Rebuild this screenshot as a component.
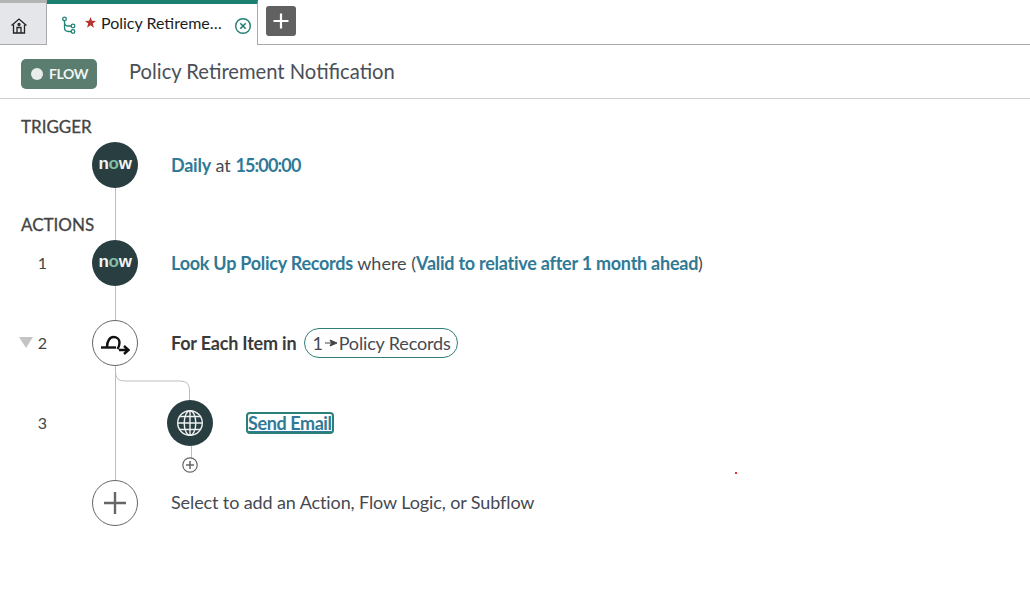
<div class="tabs">
  <button class="tab home" aria-label="Home">
    <svg width="18" height="18" viewBox="0 0 18 18" fill="none" stroke="#222" stroke-width="1.3">
      <path d="M1.5 8.5 9 2l7.5 6.5" />
      <path d="M3.5 7.5V16h11V7.5" />
      <path d="M7 16v-5.5h4V16" />
      <circle cx="9" cy="7.5" r="1" />
    </svg>
  </button>
  <div class="tab active">
    <svg class="branch" width="16" height="18" viewBox="0 0 16 18" fill="none" stroke="#1f8476" stroke-width="1.3">
      <circle cx="3.5" cy="3" r="1.8" />
      <circle cx="12" cy="10" r="1.8" />
      <circle cx="12" cy="15.5" r="1.8" />
      <path d="M3.5 5v6.5q0 4 4 4h2.7M3.5 6.5q0 3.5 4 3.5h2.7" />
    </svg>
    <svg class="star" width="11" height="11" viewBox="0 0 10 10" fill="#b5342c"><path d="M5 0l1.3 3.4L10 3.7 7.1 6l1 3.7L5 7.6 1.9 9.7l1-3.7L0 3.7l3.7-.3z" /></svg>
    <span class="tabname">Policy Retireme…</span>
    <svg class="close" width="18" height="18" viewBox="0 0 18 18" fill="none" stroke="#1f7f72" stroke-width="1.4">
      <circle cx="9" cy="9" r="7.3" />
      <path d="M6.3 6.3l5.4 5.4M11.7 6.3l-5.4 5.4" stroke-width="1.6" />
    </svg>
  </div>
  <button class="add" aria-label="New tab">
    <svg width="18" height="18" viewBox="0 0 18 18" stroke="#fff" stroke-width="2.2"><path d="M9 1.5v15M1.5 9h15" /></svg>
  </button>
</div>

<div class="titlebar">
  <span class="badge"><i class="dot"></i>FLOW</span>
  <h1>Policy Retirement Notification</h1>
</div>

<main class="flow">
  <svg class="wires" width="300" height="440" fill="none" stroke="#bdbdbd" stroke-width="1">
    <path d="M115.5 89V141M115.5 187V221M115.5 267V381" />
    <path d="M115.5 267v6q0 9 9 9h56q9 0 9 9v10" />
    <path d="M191.5 347v12" />
  </svg>

  <div class="label first">TRIGGER</div>
  <div class="row">
    <div class="num"></div>
    <div class="node dark"><span class="now">n<b>o</b>w</span></div>
    <div class="text"><a href="#t">Daily</a> at <a class="time" href="#t">15:00:00</a></div>
  </div>

  <div class="label second">ACTIONS</div>
  <div class="row">
    <div class="num">1</div>
    <div class="node dark"><span class="now">n<b>o</b>w</span></div>
    <div class="text"><a href="#a">Look Up Policy Records</a> where (<a href="#a">Valid to relative after 1 month ahead</a>)</div>
  </div>

  <div class="row gap">
    <div class="num"><i class="tri"></i>2</div>
    <div class="node light">
      <svg width="32" height="24" viewBox="0 0 32 24" fill="none" stroke="#111" stroke-width="2.4">
        <path d="M2 16.5h15" />
        <path d="M8 16c0-6 3-10 6.5-10 3.5 0 6 2.5 6 5.5 0 3-1 5-2 6.5" />
        <path d="M20 19h9.5M25 15l4.5 4-4.5 4" />
      </svg>
    </div>
    <div class="text"><strong>For Each Item in</strong><span class="pill">1<svg width="14" height="8" viewBox="0 0 14 8"><path d="M1 4h6M6 1l7 3-7 3 1.5-3z" fill="#444" stroke="#444" stroke-width="1" /></svg>Policy Records</span></div>
  </div>

  <div class="row gap nested">
    <div class="num">3</div>
    <div class="node dark">
      <svg width="28" height="28" viewBox="0 0 28 28" fill="none" stroke="#eef1f1" stroke-width="1.4">
        <circle cx="14" cy="14" r="12.3" />
        <ellipse cx="14" cy="14" rx="5.8" ry="12.3" />
        <path d="M14 1.7v24.6M1.7 14h24.6M3.6 7.5h20.8M3.6 20.5h20.8" />
      </svg>
      <span class="miniadd">
        <svg width="16" height="16" viewBox="0 0 16 16" fill="#fff" stroke="#666" stroke-width="1.2">
          <circle cx="8" cy="8" r="7.2" />
          <path d="M8 4v8M4 8h8" stroke-width="1.5" />
        </svg>
      </span>
    </div>
    <div class="text send"><a class="focused" href="#s">Send Email</a></div>
  </div>

  <div class="row gap">
    <div class="num"></div>
    <div class="node light">
      <svg width="24" height="24" viewBox="0 0 24 24" stroke="#666" stroke-width="2.4"><path d="M12 1v22M1 12h22" /></svg>
    </div>
    <div class="text add-text">Select to add an Action, Flow Logic, or Subflow</div>
  </div>

  <i class="speck"></i>
</main>

<style>
  :global(body) {
    margin: 0;
    background: #fff;
  }
  .tabs, .titlebar, .flow {
    font-family: Lato, "Noto Sans", sans-serif;
    color: #454a52;
  }
  .tabs {
    display: flex;
    height: 44px;
    border-bottom: 1px solid #a9a9a9;
  }
  .tab {
    box-sizing: border-box;
    height: 45px;
    padding: 0;
    border: 0;
  }
  .home {
    width: 47px;
    background: #e4e6e9;
    border-top: 3px solid #b4b4b4;
    border-right: 1px solid #a9a9a9;
    border-bottom: 1px solid #a9a9a9;
    display: flex;
    align-items: center;
    justify-content: center;
    padding: 5px 8px 0 0;
  }
  .active {
    width: 211px;
    background: #fff;
    border-top: 4px solid #1d7f6f;
    border-right: 1px solid #a9a9a9;
    display: flex;
    align-items: center;
    padding-left: 14px;
  }
  .branch { flex: none; margin-top: 1px; }
  .star {
    flex: none;
    margin: -5px 0 0 8px;
  }
  .tabname {
    color: #1d1d1d;
    font-size: 16px;
    margin: -4px 0 0 5px;
    white-space: nowrap;
  }
  .close { margin-left: auto; margin-right: 6px; margin-top: 3px; transform: translateX(1px); }
  .add {
    width: 30px;
    height: 30px;
    margin: 6px 0 0 8px;
    padding: 0;
    border: 0;
    border-radius: 3px;
    background: #616161;
    display: flex;
    align-items: center;
    justify-content: center;
  }
  .titlebar {
    height: 53px;
    border-bottom: 1px solid #cfcfcf;
    display: flex;
    align-items: center;
    padding-left: 21px;
  }
  .badge {
    box-sizing: border-box;
    width: 76px;
    height: 30px;
    margin-top: 4px;
    background: #5a7d70;
    border-radius: 5px;
    color: #f2f5f4;
    font-size: 14px;
    font-weight: 700;
    letter-spacing: -0.4px;
    display: flex;
    align-items: center;
    padding-left: 10px;
    gap: 6px;
  }
  .dot {
    width: 12px;
    height: 12px;
    background: #e8edeb;
    border-radius: 50%;
  }
  h1 {
    margin: -2px 0 0 32px;
    font-size: 20.2px;
    font-weight: 400;
    color: #4b4f58;
  }
  .flow {
    position: relative;
    padding: 18px 0 0 21px;
    font-size: 18px;
  }
  .wires {
    position: absolute;
    left: 0;
    top: 0;
  }
  .label {
    height: 20px;
    line-height: 20px;
    font-size: 17px;
    color: #444;
    margin-bottom: 5px;
    -webkit-text-stroke: 0.3px #444;
  }
  .second { margin-top: 27px; }
  .row {
    position: relative;
    display: flex;
    align-items: center;
    height: 46px;
  }
  .gap { margin-top: 34px; }
  .num {
    width: 71px;
    flex: none;
    box-sizing: border-box;
    padding-right: 45px;
    display: flex;
    justify-content: flex-end;
    align-items: center;
    font-size: 16px;
    color: #444;
    margin-top: -2px;
  }
  .tri {
    width: 0;
    height: 0;
    border-left: 7px solid transparent;
    border-right: 7px solid transparent;
    border-top: 11px solid #c4c4c4;
    margin-right: 5px;
  }
  .node {
    box-sizing: border-box;
    width: 46px;
    height: 46px;
    flex: none;
    border-radius: 50%;
    display: flex;
    align-items: center;
    justify-content: center;
    position: relative;
  }
  .dark { background: #293e40; }
  .light { background: #fff; border: 1px solid #666; }
  .now {
    font-family: "Liberation Sans", sans-serif;
    font-weight: 700;
    font-size: 17px;
    color: #f1f4f3;
    letter-spacing: -0.3px;
    margin-top: -3px;
  }
  .now b { color: #7fbfa5; }
  .text {
    margin-left: 33px;
    display: flex;
    align-items: center;
    white-space: pre;
  }
  .add-text { letter-spacing: -0.11px; margin-top: -2px; }
  .text a {
    color: #2f7a96;
    font-weight: 700;
    letter-spacing: -0.25px;
    text-decoration: none;
  }
  .text a.time { letter-spacing: -0.85px; }
  .text strong { font-weight: 700; color: #3a3a3a; letter-spacing: -0.2px; }
  .pill {
    box-sizing: border-box;
    height: 30px;
    margin-left: 8px;
    padding: 0 6px 0 7px;
    border: 1px solid #2f7f76;
    border-radius: 15px;
    display: inline-flex;
    align-items: center;
    letter-spacing: -0.15px;
    color: #454a52;
  }
  .pill svg { margin: 0 1px; }
  .nested .node { margin-left: 75px; }
  .send { margin-left: 35px; }
  .text a.focused {
    text-decoration: underline;
    letter-spacing: -0.4px;
    outline: 2px solid #2a7f78;
    border-radius: 2px;
    line-height: 18px;
  }
  .miniadd {
    position: absolute;
    left: 15px;
    top: 57px;
    width: 16px;
    height: 16px;
    line-height: 0;
  }
  .speck {
    position: absolute;
    left: 735px;
    top: 373px;
    width: 2px;
    height: 2px;
    background: #e0303c;
  }
</style>
